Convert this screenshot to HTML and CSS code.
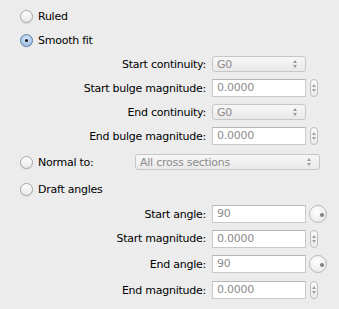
FILE: index.html
```html
<!DOCTYPE html>
<html>
<head>
<meta charset="utf-8">
<link rel="stylesheet" href="styles.css">
</head>
<body>
<div class="panel">
  <div class="radio-row h24"><span class="radio"></span><span class="rtext">Ruled</span></div>
  <div class="radio-row h24"><span class="radio on"></span><span class="rtext">Smooth fit</span></div>

  <div class="frow h24"><span class="lbl">Start continuity:</span><div class="popup"><span>G0</span><span class="arrows"></span></div></div>
  <div class="frow h24"><span class="lbl">Start bulge magnitude:</span><div class="field">0.0000</div><span class="stepper"></span></div>
  <div class="frow h24"><span class="lbl">End continuity:</span><div class="popup"><span>G0</span><span class="arrows"></span></div></div>
  <div class="frow h24"><span class="lbl">End bulge magnitude:</span><div class="field">0.0000</div><span class="stepper"></span></div>

  <div class="radio-row h28"><span class="radio"></span><span class="rtext nt">Normal to:</span><div class="popup wide"><span>All cross sections</span><span class="arrows"></span></div></div>
  <div class="radio-row h26"><span class="radio"></span><span class="rtext">Draft angles</span></div>

  <div class="frow h24"><span class="lbl">Start angle:</span><div class="field">90</div><span class="dial"></span></div>
  <div class="frow h25"><span class="lbl">Start magnitude:</span><div class="field">0.0000</div><span class="stepper"></span></div>
  <div class="frow h26"><span class="lbl">End angle:</span><div class="field">90</div><span class="dial"></span></div>
  <div class="frow h26"><span class="lbl">End magnitude:</span><div class="field">0.0000</div><span class="stepper"></span></div>
</div>
</body>
</html>
```

FILE: styles.css
```css
html, body {
  margin: 0;
  padding: 0;
  background: #ececec;
}
.panel {
  width: 339px;
  height: 309px;
  padding-top: 4px;
  box-sizing: border-box;
  font-family: "DejaVu Sans", "Lucida Grande", sans-serif;
  font-size: 11px;
  letter-spacing: -0.25px;
  color: #000;
}
.h24 { height: 24px; }
.h25 { height: 25px; }
.h26 { height: 26px; }
.h28 { height: 28px; }

.radio-row {
  display: flex;
  align-items: center;
  padding-left: 20px;
}
.radio {
  width: 13px;
  height: 13px;
  box-sizing: border-box;
  border-radius: 50%;
  border: 1px solid #a5a5a5;
  background: linear-gradient(#ffffff, #e8e8e8);
  box-shadow: 0 1px 1px rgba(0,0,0,0.08);
  position: relative;
  flex: none;
}
.radio.on {
  border-color: #5f7fa6;
  background: radial-gradient(circle at 50% 35%, #d4e6f8, #8fb4de);
}
.radio.on::after {
  content: "";
  position: absolute;
  left: 4px;
  top: 4px;
  width: 3px;
  height: 3px;
  border-radius: 50%;
  background: #111;
}
.rtext {
  margin-left: 5px;
}
.rtext.nt {
  width: 97px;
}

.frow {
  display: grid;
  grid-template-columns: 206px 95px auto;
  column-gap: 5px;
  align-items: center;
}
.lbl {
  text-align: right;
  white-space: nowrap;
}
.popup {
  height: 16px;
  box-sizing: border-box;
  border: 1px solid #c6c6c6;
  border-radius: 3px;
  background: linear-gradient(#f7f7f7, #e9e9e9);
  color: #8c8c8c;
  display: flex;
  align-items: center;
  justify-content: space-between;
  padding: 0 8px 0 4px;
  margin-left: 1px;
}
.popup.wide {
  width: 185px;
  margin-left: 0;
}
.arrows {
  width: 4px;
  height: 8px;
  position: relative;
}
.arrows::before, .arrows::after {
  content: "";
  position: absolute;
  left: 0;
  border-left: 2px solid transparent;
  border-right: 2px solid transparent;
}
.arrows::before {
  top: 0;
  border-bottom: 3px solid #9a9a9a;
}
.arrows::after {
  bottom: 0;
  border-top: 3px solid #9a9a9a;
}
.field {
  height: 18px;
  box-sizing: border-box;
  border: 1px solid #c9c9c9;
  border-top-color: #b5b5b5;
  background: #fff;
  color: #8c8c8c;
  padding-left: 4px;
  line-height: 16px;
  margin-left: 1px;
}
.stepper {
  width: 8px;
  height: 18px;
  box-sizing: border-box;
  border: 1px solid #bdbdbd;
  border-radius: 4px;
  background: linear-gradient(#fafafa, #ececec);
  position: relative;
  margin-left: -1px;
}
.stepper::before, .stepper::after {
  content: "";
  position: absolute;
  left: 1px;
  border-left: 2px solid transparent;
  border-right: 2px solid transparent;
}
.stepper::before {
  top: 4px;
  border-bottom: 3px solid #a0a0a0;
}
.stepper::after {
  bottom: 4px;
  border-top: 3px solid #a0a0a0;
}
.dial {
  width: 18px;
  height: 18px;
  box-sizing: border-box;
  border-radius: 50%;
  border: 1px solid #b9b9b9;
  background: radial-gradient(circle at 40% 35%, #ffffff, #e4e4e4);
  position: relative;
  margin-left: -2px;
}
.dial::after {
  content: "";
  position: absolute;
  right: 2px;
  top: 7px;
  width: 4px;
  height: 4px;
  border-radius: 50%;
  background: #808080;
}
```
